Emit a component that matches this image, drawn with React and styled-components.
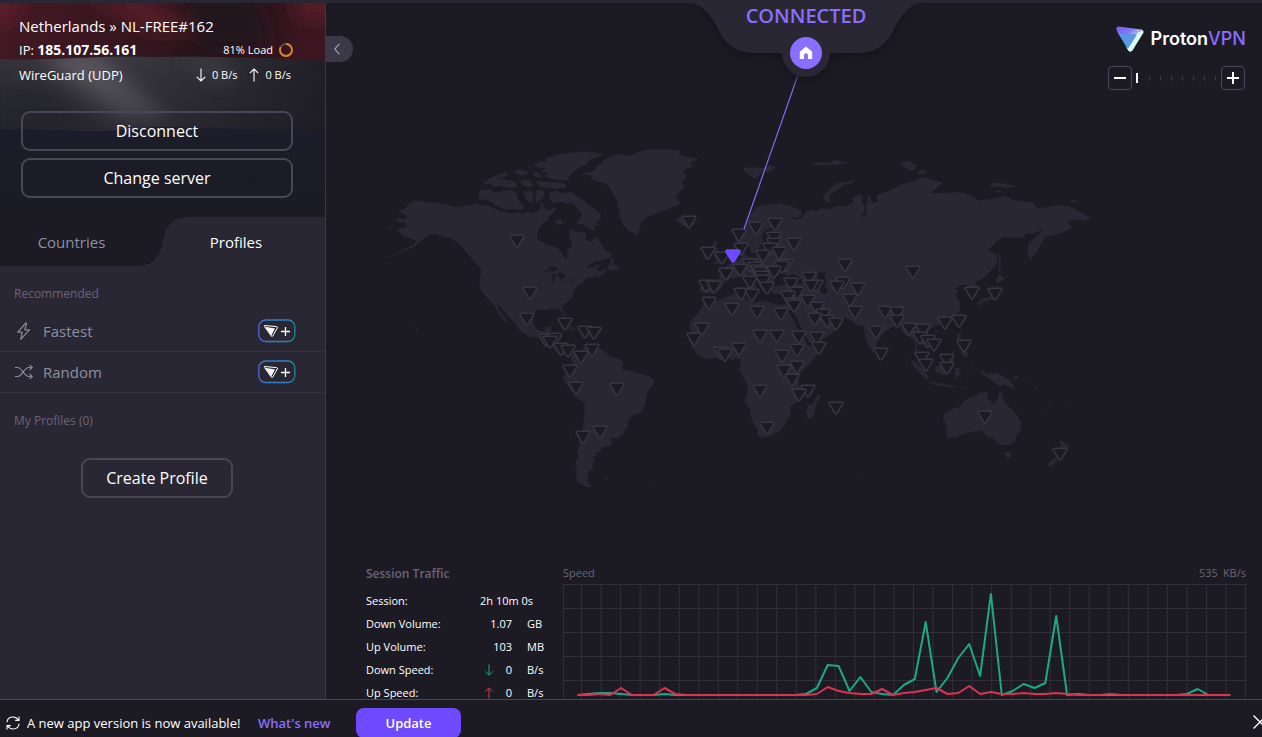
import React from 'react';
import styled, { createGlobalStyle } from 'styled-components';

const c = {
  bg: '#1c1b24',
  panel: '#292733',
  line: '#3a3846',
  outline: '#4a4658',
  purple: '#8a6eff',
  accent: '#6d4aff',
  muted: '#6d6278',
  soft: '#8e90a2',
  green: '#1ea885',
  red: '#dc3251',
};

const Global = createGlobalStyle`
  *, *::before, *::after { box-sizing: border-box; }
  body {
    margin: 0;
    background: ${c.bg};
    color: #fff;
    font-family: "Open Sans", "Noto Sans", sans-serif;
    font-size: 12px;
    line-height: 20px;
  }
  button, input { font: inherit; color: inherit; margin: 0; }
  button { padding: 0; border: 0; background: none; cursor: pointer; }
  svg { display: block; flex: none; }
`;

/* ---------- frame ---------- */

const Window = styled.div`
  display: flex;
  flex-direction: column;
  height: 100vh;
  overflow: hidden;
  border-top: 3px solid ${c.panel};
`;

const Body = styled.div`
  display: flex;
  flex: 1;
  min-height: 0;
`;

/* ---------- sidebar ---------- */

const Sidebar = styled.aside`
  flex: none;
  width: 326px;
  background: ${c.panel};
  border-right: 1px solid ${c.line};
`;

const Status = styled.section`
  position: relative;
  height: 214px;
  padding: 12px 32px 0 19px;
  background: ${c.bg};
`;

const FlagArt = styled.svg`
  position: absolute;
  inset: 0;
  width: 100%;
  height: 100%;
`;

const StatusContent = styled.div`
  position: relative;
`;

const StatusRow = styled.div`
  display: flex;
  align-items: center;
  justify-content: space-between;
  height: ${(p) => p.$height}px;
  font-size: ${(p) => p.$size}px;
  white-space: nowrap;

  b { font-size: 14px; }
`;

const Meter = styled.span`
  display: flex;
  align-items: center;
  gap: 6px;
  font-size: 11px;
`;

const Speeds = styled.span`
  display: flex;
  gap: 12px;
  padding-right: 2px;
`;

const OutlineButton = styled.button`
  width: ${(p) => p.$width || '100%'};
  height: 40px;
  border: 2px solid ${c.outline};
  border-radius: 9px;
  font-size: 16px;
`;

const StatusActions = styled.div`
  display: flex;
  flex-direction: column;
  gap: 7px;
  margin: 24px 0 0 2px;
`;

const Tabs = styled.nav`
  display: grid;
  grid-template-columns: 147px 1fr;
  height: 49px;
  background: ${c.bg};
`;

const Tab = styled.button`
  position: relative;
  padding-right: ${(p) => (p.$active ? 0 : 4)}px;
  color: ${(p) => (p.$active ? '#fff' : c.soft)};
  font-size: 15px;

  span { position: relative; }
`;

const TabShape = styled.svg`
  position: absolute;
  top: 0;
  left: -7px;
  width: calc(100% + 7px);
  height: 49px;
`;

const ListTitle = styled.h2`
  margin: ${(p) => p.$top}px 0 0 14px;
  color: ${c.muted};
  font-size: 12px;
  font-weight: 400;
`;

const ProfileRow = styled.button`
  display: flex;
  align-items: center;
  width: 100%;
  height: 41px;
  padding: 0 29px 0 14px;
  border-bottom: 1px solid #35333f;
  color: ${c.soft};
  font-size: 15px;
  text-align: left;

  span { flex: 1; padding-left: 9px; }
`;

const Profiles = styled.div`
  margin-top: 7px;
`;

const CreateArea = styled.div`
  display: flex;
  justify-content: center;
  padding: 27px 11px 0 0;
`;

/* ---------- main ---------- */

const Main = styled.main`
  position: relative;
  display: flex;
  flex: 1;
  flex-direction: column;
  justify-content: space-between;
  min-width: 0;
  padding: 0 16px 0 40px;
`;

const MapCanvas = styled.svg`
  position: absolute;
  inset: 0;
  width: 100%;
  height: 100%;
`;

const Collapse = styled.button`
  position: absolute;
  top: 33px;
  left: 0;
  display: flex;
  align-items: center;
  justify-content: center;
  width: 27px;
  height: 26px;
  padding-right: 6px;
  border-radius: 0 13px 13px 0;
  background: #3b3947;
`;

const TopRow = styled.header`
  position: relative;
  display: grid;
  grid-template-columns: 1fr auto 1fr;
  align-items: start;
`;

const Banner = styled.div`
  position: relative;
  grid-column: 2;
  display: flex;
  flex-direction: column;
  align-items: center;
  width: 226px;
  height: 76px;
  gap: 10px;
`;

const BannerShape = styled.svg`
  position: absolute;
  inset: 0;
  overflow: visible;
  filter: drop-shadow(0 4px 6px #14131a);
`;

const BannerText = styled.strong`
  position: relative;
  height: 24px;
  color: ${c.purple};
  font-size: 20px;
  font-weight: 600;
  line-height: 26px;
`;

const HomeBadge = styled.button`
  position: relative;
  display: flex;
  align-items: center;
  justify-content: center;
  width: 32px;
  height: 32px;
  border-radius: 50%;
  background: ${c.purple};
`;

const Tools = styled.div`
  justify-self: end;
  display: flex;
  flex-direction: column;
  align-items: flex-end;
  gap: 14px;
  padding-top: 22px;
`;

const Brand = styled.div`
  display: flex;
  align-items: center;
  gap: 7px;
  height: 27px;
  font-family: Inter, sans-serif;
  font-size: 18px;
  font-weight: 600;

  b { color: ${c.purple}; font-weight: 500; }
`;

const Zoom = styled.div`
  display: flex;
  align-items: center;
  gap: 4px;
  padding-right: 1px;
`;

const ZoomButton = styled.button`
  display: flex;
  align-items: center;
  justify-content: center;
  width: 24px;
  height: 24px;
  border: 1px solid ${c.outline};
  border-radius: 4px;
`;

const ZoomRange = styled.input`
  appearance: none;
  width: 81px;
  height: 10px;
  background: repeating-linear-gradient(90deg, transparent 0 10px, ${c.line} 10px 11px) 3px 50% / 100% 5px no-repeat;

  &::-webkit-slider-thumb {
    appearance: none;
    width: 2px;
    height: 10px;
    background: #fff;
  }
`;

const Traffic = styled.section`
  position: relative;
  display: flex;
  gap: 17px;
  margin-bottom: -5px;
`;

const Session = styled.div`
  flex: none;
  width: 180px;
`;

const SessionTitle = styled.h2`
  margin: 0 0 5px;
  color: ${c.muted};
  font-size: 12px;
  font-weight: 600;
`;

const StatTable = styled.table`
  width: 100%;
  border-collapse: collapse;
  table-layout: fixed;
  font-size: 11px;

  col.label { width: 114px; }
  col.icon { width: 14px; }
  col.number { width: 18px; }

  th, td {
    height: 23px;
    padding: 0;
    text-align: left;
    font-weight: 400;
    white-space: nowrap;
  }
  td.icon { padding-left: 4px; }
  td.value { text-align: right; }
  td.unit { padding-left: 15px; }
`;

const Chart = styled.div`
  flex: 1;
  min-width: 0;
`;

const ChartHead = styled.div`
  display: flex;
  justify-content: space-between;
  padding-bottom: 2px;
  color: ${c.muted};
  font-size: 11px;
  line-height: 18px;
`;

const Peak = styled.span`
  display: flex;
  gap: 5px;
`;

const ChartCanvas = styled.svg`
  width: 100%;
  height: 115px;
  path, line { vector-effect: non-scaling-stroke; }
`;

/* ---------- footer ---------- */

const Footer = styled.footer`
  position: relative;
  display: flex;
  flex: none;
  align-items: flex-start;
  height: 38px;
  padding: 8px 0 0 6px;
  border-top: 1px solid ${c.outline};
  font-size: 13px;
  line-height: 30px;
  white-space: nowrap;
  overflow: hidden;
`;

const Notice = styled.span`
  display: flex;
  align-items: center;
  gap: 7px;
  width: 252px;
`;

const NewsLink = styled.a`
  width: 98px;
  color: ${c.purple};
  font-weight: 600;
  text-decoration: none;
`;

const UpdateButton = styled.button`
  width: 105px;
  height: 30px;
  border-radius: 8px;
  background: ${c.accent};
  font-weight: 600;
`;

const CloseButton = styled.button`
  margin: 7px -5px 0 auto;
`;

/* ---------- drawings ---------- */

const Arrow = ({ up, color = '#fff' }) => (
  <svg width="10" height="14" viewBox="0 0 10 14" fill="none" stroke={color} strokeWidth="1.1">
    <path d={up ? 'M5 13.5V1M0.8 5.2 5 1l4.2 4.2' : 'M5 0.5V13M0.8 8.8 5 13l4.2-4.2'} />
  </svg>
);

const SmallArrow = ({ up, color }) => (
  <svg width="10" height="12" viewBox="0 0 10 12" fill="none" stroke={color} strokeWidth="1">
    <path d={up ? 'M5 11.5V1M1.2 4.6 5 0.8l3.8 3.8' : 'M5 0.5V11M1.2 7.4 5 11.2l3.8-3.8'} />
  </svg>
);

const Flag = () => (
  <FlagArt viewBox="0 0 325 214" preserveAspectRatio="none" aria-hidden="true">
    <defs>
      <linearGradient id="fRed" x1="0" y1="0" x2="1" y2="0.1">
        <stop offset="0" stopColor="#461924" />
        <stop offset="0.3" stopColor="#3a1720" />
        <stop offset="0.5" stopColor="#35161f" />
        <stop offset="0.7" stopColor="#25151b" />
        <stop offset="1" stopColor="#3c1620" />
      </linearGradient>
      <linearGradient id="fWhite" x1="0" y1="0" x2="1" y2="0">
        <stop offset="0" stopColor="#333237" />
        <stop offset="0.35" stopColor="#3c3a41" />
        <stop offset="0.65" stopColor="#2f2e34" />
        <stop offset="1" stopColor="#201f26" />
      </linearGradient>
      <linearGradient id="fBlue" x1="0" y1="0.5" x2="0" y2="1">
        <stop offset="0" stopColor="#1b1d2b" />
        <stop offset="1" stopColor="#1c1b24" />
      </linearGradient>
      <linearGradient id="fShade" x1="0" y1="0" x2="0" y2="1">
        <stop offset="0" stopColor="#1c1b24" stopOpacity="0" />
        <stop offset="1" stopColor="#1c1b24" stopOpacity="0.5" />
      </linearGradient>
      <filter id="soft" x="-30%" y="-30%" width="160%" height="160%"><feGaussianBlur stdDeviation="9" /></filter>
      <clipPath id="redArea"><path d="M0 0H325V58C250 54 200 53 150 54C100 52 60 58 0 56Z" /></clipPath>
      <clipPath id="whiteArea"><path d="M0 56C60 58 100 52 150 54C200 53 250 54 325 58V128C250 126 190 124 150 124C100 132 40 124 0 126Z" /></clipPath>
    </defs>
    <rect width="325" height="214" fill="url(#fBlue)" />
    <g clipPath="url(#redArea)">
      <rect width="325" height="60" fill="url(#fRed)" />
      <g filter="url(#soft)">
        <path d="M-20 -10H30L10 20L-20 30Z" fill="#5a1d2a" />
        <path d="M80 -10H140L200 30H150Z" fill="#521b28" />
        <path d="M175 -5H255L275 45H205Z" fill="#20141a" />
        <path d="M285 -10H335V18H300Z" fill="#551a27" />
      </g>
    </g>
    <g clipPath="url(#whiteArea)">
      <rect y="50" width="325" height="80" fill="url(#fWhite)" />
      <g filter="url(#soft)">
        <path d="M40 52H95L172 118H125Z" fill="#5c5a61" />
        <path d="M180 56H215L240 80H215Z" fill="#3f3e45" />
        <path d="M-10 85L40 80L105 130H-10Z" fill="#2a2930" />
      </g>
      <rect y="56" width="325" height="72" fill="url(#fShade)" />
    </g>
  </FlagArt>
);

const PlusBadge = () => (
  <svg width="38" height="24" viewBox="0 0 38 24" fill="none">
    <defs>
      <linearGradient id="badge" x1="0" y1="0" x2="1" y2="0">
        <stop offset="0" stopColor="#5a66d8" />
        <stop offset="0.25" stopColor="#2d7fcb" />
        <stop offset="0.75" stopColor="#2d7fcb" />
        <stop offset="1" stopColor="#1f8b93" />
      </linearGradient>
    </defs>
    <rect x="0.8" y="1" width="36" height="21.5" rx="7" stroke="url(#badge)" strokeWidth="1.3" />
    <path d="M6.5 6.5 18.6 7.6Q20 7.8 19.3 9L14.8 17Q14 18 13.2 17L6.4 7.4Z" stroke="#fff" strokeWidth="1" strokeLinejoin="round" />
    <path d="M7 7.8 17 9.4 13.3 16.6Z" fill="#fff" />
    <path d="M27.5 8v9M23 12.5h9" stroke="#fff" strokeWidth="1.3" />
  </svg>
);

const Bolt = () => (
  <svg width="20" height="20" viewBox="0 0 20 20" fill="none" stroke="#8a8a98" strokeWidth="1.2" strokeLinejoin="round">
    <path d="M11.8 2 3.8 11.2H8.2L6.8 18.4 15.4 8.8H10.8L12.6 2.4Z" />
  </svg>
);

const ShuffleIcon = () => (
  <svg width="20" height="20" viewBox="0 0 20 20" fill="none" stroke="#8a8a98" strokeWidth="1.2">
    <path d="M1 5.5H3.6C8 5.5 10 14.5 14.6 14.5H18M1 14.5H3.6C8 14.5 10 5.5 14.6 5.5H18M15.6 3 18.2 5.5 15.6 8M15.6 12 18.2 14.5 15.6 17" />
  </svg>
);

const LoadRing = () => (
  <svg width="14" height="14" viewBox="0 0 14 14" fill="none" strokeWidth="1.8">
    <circle cx="7" cy="7" r="6" stroke="#5b4a4a" />
    <circle cx="7" cy="7" r="6" stroke="#e0852f" strokeDasharray="30.5 40" transform="rotate(-90 7 7)" />
  </svg>
);

const RefreshIcon = () => (
  <svg width="14" height="14" viewBox="0 0 14 14" fill="none" stroke="#fff" strokeWidth="1.1">
    <path d="M1 6.2C1.2 3 3.8 1 7 1C9.4 1 11.2 2 12.6 4.2M13 0.6V4.4H9.2M13 7.8C12.8 11 10.2 13 7 13C4.6 13 2.8 12 1.4 9.8M1 13.4V9.6H4.8" />
  </svg>
);

const LogoMark = () => (
  <svg width="28" height="26" viewBox="0 0 28 26">
    <defs>
      <linearGradient id="lg1" x1="0" y1="0" x2="1" y2="0.4">
        <stop offset="0" stopColor="#7a55f0" />
        <stop offset="0.6" stopColor="#7b7cf5" />
        <stop offset="1" stopColor="#b9b4e8" />
      </linearGradient>
      <linearGradient id="lg2" x1="0.8" y1="0" x2="0.3" y2="1">
        <stop offset="0" stopColor="#5f8fe8" />
        <stop offset="1" stopColor="#4fa6dd" />
      </linearGradient>
    </defs>
    <path d="M25 3.6Q28.2 4.2 27.4 6.8L16.6 24.2Q14.4 27 12.2 24.4L10.4 21.4 20.6 7.6Z" fill="#d8fbf4" />
    <path d="M1.6 6.6 21 8.6 12.8 21.6Q11.8 23 10.8 21.6Z" fill="url(#lg2)" />
    <path d="M2.6 0.4 25.2 3.4Q27 4 26 5.4L22.4 6 20.4 9Q19 8.4 17 8.2L2 7 0.4 3.6Q-0.2 0.4 2.6 0.4Z" fill="url(#lg1)" />
  </svg>
);

/* Land outlines, grouped by the origin their points are measured from. */
const LAND = [
  {
    origin: [380, 140],
    paths: [
      'M52 210 75 207 88 190 108 181 135 186 165 188 200 194 235 203 262 195 290 191 300 198 320 196 345 206 370 215 400 222 412 215 430 222 440 215 460 220 475 212 482 200 478 188 490 192 492 205 510 210 520 200 530 205 523 218 508 228 505 240 490 250 480 262 472 280 474 300 495 310 510 318 525 320 540 330 548 345 557 358 563 345 560 330 575 320 575 305 565 295 570 280 572 268 590 275 605 275 617 280 618 298 630 305 645 295 650 290 655 300 665 315 672 328 690 338 695 345 690 355 670 360 650 362 630 373 618 385 640 382 655 374 662 376 650 385 655 395 680 385 672 400 650 408 640 412 625 412 610 422 605 432 590 438 583 450 578 460 582 468 570 478 555 492 547 503 550 515 556 530 550 528 543 517 538 505 525 508 510 506 495 512 480 508 465 514 458 530 462 555 472 570 490 575 500 560 515 560 512 575 503 580 508 592 525 595 533 605 530 622 538 632 555 640 568 635 576 645 560 646 540 642 525 630 512 612 495 602 475 592 450 590 430 580 412 565 405 550 390 535 370 510 355 495 352 500 365 520 385 548 380 550 362 530 350 510 340 490 325 478 312 462 300 445 298 430 302 405 303 385 290 372 275 355 262 340 250 325 235 310 215 295 190 290 170 283 150 282 138 292 125 303 105 318 75 332 40 347 10 355 45 343 80 325 100 312 110 302 95 297 85 292 70 290 60 278 50 272 60 265 80 260 78 248 62 248 48 240 55 235 75 237 82 228 70 222 60 215Z',
      'M682 390 688 372 697 350 703 362 700 372 715 380 718 390 705 388 695 392Z',
      'M462 75 480 62 500 66 495 55 530 45 570 38 620 34 665 42 655 52 630 60 620 75 600 82 580 95 565 110 570 118 550 122 520 118 490 108 505 102 480 92 500 86 470 82Z',
      'M300 150 330 148 345 158 370 152 395 150 410 160 415 180 430 195 435 205 420 210 400 207 370 208 345 195 325 180 300 178 295 165Z',
      'M308 128 330 115 350 105 370 98 385 100 375 112 352 116 395 122 410 130 412 140 390 145 360 138 340 142 335 130 320 135Z',
      'M400 95 420 88 445 95 438 105 415 105Z M420 120 445 118 460 130 455 142 430 140Z M465 122 500 125 545 128 560 135 555 145 520 146 480 140Z M430 155 455 152 462 170 455 188 440 180Z M470 150 490 150 495 165 482 180 470 190 465 170Z M440 78 456 76 450 84Z M458 96 480 100 490 114 466 112Z',
      'M505 160 525 152 550 160 575 155 585 165 610 180 625 195 640 205 665 225 660 240 650 240 655 258 640 255 645 272 630 268 610 255 590 250 600 235 605 220 590 205 580 190 560 192 545 185 520 190 508 180Z',
      'M520 245 540 235 550 250 535 255Z M22 257 36 258 34 263Z M92 554 106 560 120 572 112 570Z M540 553 565 557 592 570 572 568 550 558Z M640 405 668 402 655 412Z',
      'M605 102 640 92 660 72 680 55 720 42 745 48 770 38 810 28 870 28 900 32 898 44 920 50 955 58 930 70 940 80 910 90 918 110 906 130 914 140 900 155 886 170 902 190 870 205 840 215 820 225 800 232 785 245 778 265 772 287 760 280 745 270 730 255 722 240 715 220 722 205 710 200 715 185 700 165 690 145 675 128 650 125 630 115 640 108Z',
    ],
  },
  {
    origin: [540, 300],
    paths: [
      'M95 165 108 158 125 150 130 143 150 135 160 140 178 145 195 155 210 170 240 178 250 190 245 208 262 210 280 215 300 222 325 228 342 240 342 252 328 268 320 285 318 300 312 320 300 338 280 345 265 358 262 380 250 400 235 415 215 415 208 410 215 425 213 438 185 443 182 455 165 457 172 468 158 472 165 482 155 490 160 505 145 515 145 530 140 542 150 555 162 560 140 562 120 550 108 540 112 525 105 515 112 500 107 490 115 470 112 455 118 440 115 430 120 410 128 385 132 350 135 310 120 300 105 290 95 275 82 255 70 240 70 228 80 215 85 200 100 190 92 178Z',
      'M192 536 207 534 198 541Z M326 557 336 557 334 561Z',
    ],
  },
  {
    origin: [670, 270],
    paths: [
      'M100 90 115 80 140 92 165 82 195 72 215 70 225 72 222 85 235 90 255 100 265 95 280 90 305 100 330 105 350 103 358 108 355 125 368 145 380 170 388 190 405 210 412 225 425 228 450 220 455 225 445 248 430 270 410 290 390 310 385 325 387 345 395 365 390 385 375 400 360 412 362 435 350 448 345 465 325 485 305 497 275 503 263 498 262 480 250 460 242 435 240 420 225 395 228 380 235 365 232 345 222 325 208 300 210 285 213 268 195 265 185 270 170 258 150 262 125 265 105 268 80 250 65 230 55 205 65 185 58 170 65 150 80 135 90 120 100 105Z',
      'M447 370 450 380 440 400 432 435 425 447 412 443 410 425 415 405 430 398 440 380Z',
    ],
  },
  {
    origin: [670, 140],
    paths: [
      'M195 300 198 280 210 265 222 262 232 245 240 225 255 205 275 195 300 192 330 190 360 198 390 210 397 222 385 235 365 230 375 240 395 235 410 212 425 210 440 212 455 205 480 208 500 197 525 200 550 190 548 175 565 162 580 170 575 185 585 200 580 220 570 230 585 228 590 210 588 195 595 180 590 170 600 168 606 188 625 186 618 166 640 158 665 150 690 135 730 125 755 112 775 116 800 122 820 130 782 158 800 160 860 157 885 160 910 170 925 182 975 175 1005 168 1030 180 1090 188 1105 204 1140 200 1160 195 1200 200 1230 215 1265 235 1240 243 1215 238 1190 246 1208 262 1180 278 1150 285 1125 290 1112 312 1100 335 1080 360 1072 335 1075 310 1100 288 1122 266 1095 280 1070 280 1060 295 1030 292 1000 292 980 305 955 330 970 338 983 345 980 370 965 390 940 415 915 425 922 445 918 462 906 462 890 435 875 435 850 448 868 450 858 462 870 490 870 512 850 530 820 548 795 558 780 568 772 578 782 600 775 630 765 622 755 612 742 600 738 610 745 640 762 668 752 664 735 640 735 605 720 590 705 585 690 560 670 560 650 572 632 590 620 605 618 625 608 638 595 615 585 590 582 560 565 558 550 545 525 533 490 530 468 520 455 505 462 525 480 540 515 550 508 562 480 585 450 600 418 608 410 595 395 565 378 530 365 505 362 485 355 465 335 462 310 462 300 445 330 435 370 430 400 432 395 422 385 410 368 402 350 408 340 395 325 405 315 415 310 430 298 436 290 442 286 456 275 450 268 435 255 415 240 402 230 402 245 420 260 440 250 450 235 430 220 412 205 408 195 415 180 415 165 425 150 450 130 460 110 460 90 455 92 430 90 420 120 418 150 418 148 400 140 390 160 385 175 375 190 362 205 360 215 350 208 330 215 320 222 330 225 345 240 352 260 352 275 348 285 335 290 320 305 312 335 308 330 300 310 302 300 290 310 270 300 262 285 275 275 290 280 305 268 320 262 335 245 342 240 325 225 310 210 310Z',
      'M128 310 140 302 145 312 135 320 150 335 160 350 165 360 155 370 130 372 140 360 130 350 138 340 125 325Z M102 345 118 335 124 350 112 360 100 358Z',
      'M18 238 30 231 44 240 70 240 76 252 55 262 34 254Z',
      'M220 85 245 80 275 85 300 75 318 82 300 95 275 98 255 118 240 105 225 95Z M420 70 450 66 475 68 500 58 510 66 540 66 500 75 440 76Z',
      'M557 120 545 130 520 135 500 150 480 165 478 180 490 188 470 185 458 172 475 150 500 130 530 125Z',
    ],
  },
  {
    origin: [850, 140],
    paths: [
      'M150 72 175 62 200 75 195 90 180 92 160 80Z M200 98 220 88 232 95 205 105Z M418 135 430 128 460 130 497 140 470 143 450 140 430 142Z M432 154 450 150 455 158Z M660 183 672 179 685 181 676 187Z M0 122 16 120 8 128Z',
      'M448 335 453 350 450 385 456 400 447 398 446 370Z M438 418 448 405 468 415 455 425 440 428Z M378 492 395 476 420 470 436 452 440 430 446 446 440 474 415 482 400 485 386 497Z M470 412 490 402 486 406Z M524 372 536 362 530 370Z',
      'M320 600 322 580 333 582 330 600 325 610Z M333 640 350 630 356 648 345 652Z M252 572 268 570 258 580Z M305 640 318 620 312 636Z',
      'M178 655 200 668 220 690 235 708 235 720 215 705 195 685Z M230 724 260 728 300 735 330 742 300 742 250 734Z M255 680 270 675 285 655 310 645 312 660 305 690 290 705 270 702 258 695Z M315 685 345 680 326 690 336 716 324 704 318 720 314 704Z M335 746 358 736 346 746Z M364 674 370 684 364 690Z',
      'M385 690 400 695 415 700 440 698 465 712 480 722 498 748 480 742 465 735 450 740 435 730 415 715 398 705Z M486 714 508 706 500 718Z M522 720 534 728 530 728Z M544 738 564 748 556 746Z M578 804 594 818 586 816Z M655 790 670 783 662 790Z M592 774 600 786 594 782Z',
      'M282 820 300 810 330 800 345 780 360 772 375 768 385 760 405 755 418 760 410 775 435 792 443 775 450 750 458 765 465 785 475 800 490 812 505 830 514 850 512 870 500 885 495 905 475 915 450 915 438 905 425 890 415 893 405 882 390 872 365 875 340 882 320 892 292 894 288 880 292 860 280 838Z',
      'M465 937 485 938 480 955 468 952Z M630 898 645 910 658 918 650 935 635 940Z M618 952 600 965 592 975 605 980 622 962Z M18 996 30 998 24 1002Z',
    ],
  },
];

const WATER = [
  { origin: [380, 140], d: 'M492 395 510 380 525 380 535 390 518 393Z M518 402 530 400 524 412 522 428 517 425Z M530 402 548 400 560 410 550 412 545 425 538 412Z M545 430 565 425 583 416 580 422 560 430Z M370 200 388 212 420 216 400 220Z' },
  { origin: [670, 140], d: 'M445 395 468 395 462 405 470 420 465 435 472 450 470 462 455 460 448 445 440 420Z M318 250 322 262 316 280 312 270Z' },
];

const PINS = [
  [517, 241], [530, 293], [527, 319], [565, 324], [585, 332], [594, 333], [546, 340], [555, 339], [550, 342],
  [561, 349], [568, 351], [592, 350], [581, 357], [570, 371], [576, 388], [617, 389], [600, 432], [583, 437],
  [689, 222], [775, 224], [756, 228], [739, 235], [774, 238], [774, 244], [794, 244], [741, 249], [770, 249],
  [779, 253], [708, 253], [763, 256], [722, 258], [750, 265], [845, 265], [786, 265], [782, 267], [755, 268],
  [740, 270], [758, 271], [774, 272], [760, 273], [726, 274], [762, 277], [809, 278], [763, 281], [750, 282],
  [843, 283], [791, 284], [816, 286], [811, 286], [706, 286], [714, 287], [837, 287], [767, 288], [858, 289],
  [797, 293], [741, 294], [752, 295], [788, 297], [850, 300], [808, 301], [709, 303], [792, 304], [794, 306],
  [817, 308], [732, 309], [757, 312], [855, 312], [885, 312], [781, 314], [823, 315], [815, 319], [827, 321],
  [836, 324], [702, 329], [876, 332], [760, 336], [777, 336], [799, 337], [817, 338], [694, 339], [819, 348],
  [739, 349], [797, 350], [721, 353], [725, 355], [881, 354], [782, 356], [797, 367], [784, 371], [792, 380],
  [760, 391], [808, 391], [799, 395], [836, 408], [767, 428], [913, 272], [972, 293], [995, 294], [897, 313],
  [897, 321], [959, 321], [945, 323], [909, 329], [923, 330], [920, 338], [928, 341], [934, 345], [964, 346],
  [922, 358], [947, 360], [926, 365], [947, 368], [985, 417], [1060, 454],
];

const PIN_SHAPE = 'M-5.6 -5.8H5.6Q7.6 -5.6 6.6 -3.8L1.1 5.2Q0 6.6 -1.1 5.2L-6.6 -3.8Q-7.6 -5.6 -5.6 -5.8Z';

const third = ([x, y]) => `translate(${x} ${y}) scale(0.33333)`;

const WorldMap = () => (
  <MapCanvas viewBox="326 3 936 696" role="img" aria-label="Server map">
    {LAND.map((area) => (
      <g key={area.origin.join()} transform={third(area.origin)} fill={c.panel}>
        {area.paths.map((d) => <path key={d} d={d} />)}
      </g>
    ))}
    {WATER.map((w) => (
      <path key={w.d} d={w.d} transform={third(w.origin)} fill={c.bg} />
    ))}
    {PINS.map(([x, y]) => (
      <path key={`${x}-${y}`} d={PIN_SHAPE} transform={`translate(${x} ${y})`} fill={c.bg} stroke="#373543" strokeWidth="1.6" />
    ))}
    <line x1="798" y1="75" x2="744" y2="229" stroke={c.purple} strokeWidth="1.1" />
    <path d={PIN_SHAPE} transform="translate(733 256)" fill={c.accent} stroke={c.accent} strokeWidth="1.8" />
  </MapCanvas>
);

/* Samples are distances above the baseline, in chart units. */
const POINTS = 61;
const DOWN = {
  1: 1, 2: 2, 3: 2, 4: 1, 8: 1, 21: 1, 22: 7, 23: 30, 24: 29, 25: 4, 26: 18, 27: 3, 28: 1, 30: 10, 31: 16, 32: 73, 33: 3,
  34: 17, 35: 37, 36: 51, 37: 19, 38: 101, 40: 4, 41: 11, 42: 7, 43: 12, 44: 79, 46: 1, 56: 1, 57: 6,
};
const UP = {
  2: 1, 4: 7, 8: 7, 9: 1, 22: 1, 23: 8, 24: 4, 25: 2, 26: 1, 27: 1, 28: 6, 30: 2, 31: 3, 32: 5, 33: 7, 34: 1, 35: 2, 36: 9,
  37: 1, 38: 3, 39: 1, 40: 1, 41: 2, 42: 1, 43: 1, 44: 2, 45: 1, 49: 1,
};

const series = (values) =>
  Array.from({ length: POINTS }, (_, i) => `${i ? 'L' : 'M'}${(14.5 + i * 10.88).toFixed(1)} ${111 - (values[i] || 0)}`).join('');

const gridX = (i) => (i === 0 ? 0.5 : 18.5 + (i - 1) * 19.53);

const SpeedChart = () => (
  <ChartCanvas viewBox="0 0 683 115" preserveAspectRatio="none" role="img" aria-label="Speed">
    <g stroke="#322f3c" strokeWidth="1">
      {Array.from({ length: 36 }, (_, i) => (
        <line key={i} x1={gridX(i)} x2={gridX(i)} y1="0" y2="115" />
      ))}
      {[0, 1, 2, 3, 4].map((i) => (
        <line key={i} x1="0" x2="683" y1={0.5 + i * 24} y2={0.5 + i * 24} />
      ))}
    </g>
    <path d={series(DOWN)} fill="none" stroke={c.green} strokeWidth="2" strokeLinejoin="round" />
    <path d={series(UP)} fill="none" stroke={c.red} strokeWidth="2" strokeLinejoin="round" />
  </ChartCanvas>
);

/* ---------- app ---------- */

const STATS = [
  { label: 'Down Volume:', value: '1.07', unit: 'GB' },
  { label: 'Up Volume:', value: '103', unit: 'MB' },
  { label: 'Down Speed:', value: '0', unit: 'B/s', icon: <SmallArrow color={c.green} /> },
  { label: 'Up Speed:', value: '0', unit: 'B/s', icon: <SmallArrow up color={c.red} /> },
];

export default function App() {
  return (
    <Window>
      <Global />
      <Body>
        <Sidebar>
          <Status>
            <Flag />
            <StatusContent>
              <StatusRow $height={22} $size={15}>Netherlands » NL-FREE#162</StatusRow>
              <StatusRow $height={26} $size={13}>
                <span>IP: <b>185.107.56.161</b></span>
                <Meter>81% Load <LoadRing /></Meter>
              </StatusRow>
              <StatusRow $height={24} $size={13}>
                <span>WireGuard (UDP)</span>
                <Speeds>
                  <Meter><Arrow /> 0 B/s</Meter>
                  <Meter><Arrow up /> 0 B/s</Meter>
                </Speeds>
              </StatusRow>
              <StatusActions>
                <OutlineButton>Disconnect</OutlineButton>
                <OutlineButton>Change server</OutlineButton>
              </StatusActions>
            </StatusContent>
          </Status>
          <Tabs>
            <Tab>Countries</Tab>
            <Tab $active>
              <TabShape viewBox="0 0 185 49" preserveAspectRatio="none">
                <path d="M0 49C14 48 20 39 23 24C26 8 32 1 48 0H185V49Z" fill={c.panel} />
              </TabShape>
              <span>Profiles</span>
            </Tab>
          </Tabs>
          <ListTitle $top={18}>Recommended</ListTitle>
          <Profiles>
            <ProfileRow><Bolt /><span>Fastest</span><PlusBadge /></ProfileRow>
            <ProfileRow><ShuffleIcon /><span>Random</span><PlusBadge /></ProfileRow>
          </Profiles>
          <ListTitle $top={18}>My Profiles (0)</ListTitle>
          <CreateArea>
            <OutlineButton $width="152px">Create Profile</OutlineButton>
          </CreateArea>
        </Sidebar>

        <Main>
          <WorldMap />
          <TopRow>
            <Banner>
              <BannerShape width="226" height="76" viewBox="0 0 226 76">
                <path d="M-2 0C10 2 16 10 24 24C32 41 42 50 62 50H164C184 50 194 41 202 24C210 10 216 2 228 0Z" fill={c.panel} />
                <circle cx="113" cy="50" r="24" fill={c.panel} />
              </BannerShape>
              <BannerText>CONNECTED</BannerText>
              <HomeBadge aria-label="Home">
                <svg width="14" height="14" viewBox="0 0 14 14" fill="#fff">
                  <path d="M7 0.6 13.2 5.8V13H9V9.2A2 2 0 0 0 5 9.2V13H0.8V5.8Z" />
                </svg>
              </HomeBadge>
            </Banner>
            <Tools>
              <Brand><LogoMark /><span>Proton<b>VPN</b></span></Brand>
              <Zoom>
                <ZoomButton aria-label="Zoom out">
                  <svg width="12" height="12" stroke="#fff" strokeWidth="2"><path d="M0 6h12" /></svg>
                </ZoomButton>
                <ZoomRange type="range" min="0" max="8" defaultValue="0" aria-label="Zoom" />
                <ZoomButton aria-label="Zoom in">
                  <svg width="12" height="12" stroke="#fff" strokeWidth="2"><path d="M0 6h12M6 0v12" /></svg>
                </ZoomButton>
              </Zoom>
            </Tools>
          </TopRow>
          <Collapse aria-label="Collapse sidebar">
            <svg width="6" height="12" viewBox="0 0 6 12" fill="none" stroke="#a9a7b5" strokeWidth="1.1"><path d="M5.4 0.8 0.8 6l4.6 5.2" /></svg>
          </Collapse>

          <Traffic>
            <Session>
              <SessionTitle>Session Traffic</SessionTitle>
              <StatTable>
                <colgroup>
                  <col className="label" />
                  <col className="icon" />
                  <col className="number" />
                  <col />
                </colgroup>
                <tbody>
                  <tr><th scope="row">Session:</th><td colSpan={3}>2h 10m 0s</td></tr>
                  {STATS.map((s) => (
                    <tr key={s.label}>
                      <th scope="row">{s.label}</th>
                      {s.icon && <td className="icon">{s.icon}</td>}
                      <td className="value" colSpan={s.icon ? 1 : 2}>{s.value}</td>
                      <td className="unit">{s.unit}</td>
                    </tr>
                  ))}
                </tbody>
              </StatTable>
            </Session>
            <Chart>
              <ChartHead>
                <span>Speed</span>
                <Peak><span>535</span><span>KB/s</span></Peak>
              </ChartHead>
              <SpeedChart />
            </Chart>
          </Traffic>
        </Main>
      </Body>

      <Footer>
        <Notice><RefreshIcon />A new app version is now available!</Notice>
        <NewsLink href="#news">What's new</NewsLink>
        <UpdateButton>Update</UpdateButton>
        <CloseButton aria-label="Close">
          <svg width="14" height="14" viewBox="0 0 14 14" stroke="#fff" strokeWidth="1.4"><path d="M0.5 0.5 13.5 13.5M13.5 0.5 0.5 13.5" /></svg>
        </CloseButton>
      </Footer>
    </Window>
  );
}
